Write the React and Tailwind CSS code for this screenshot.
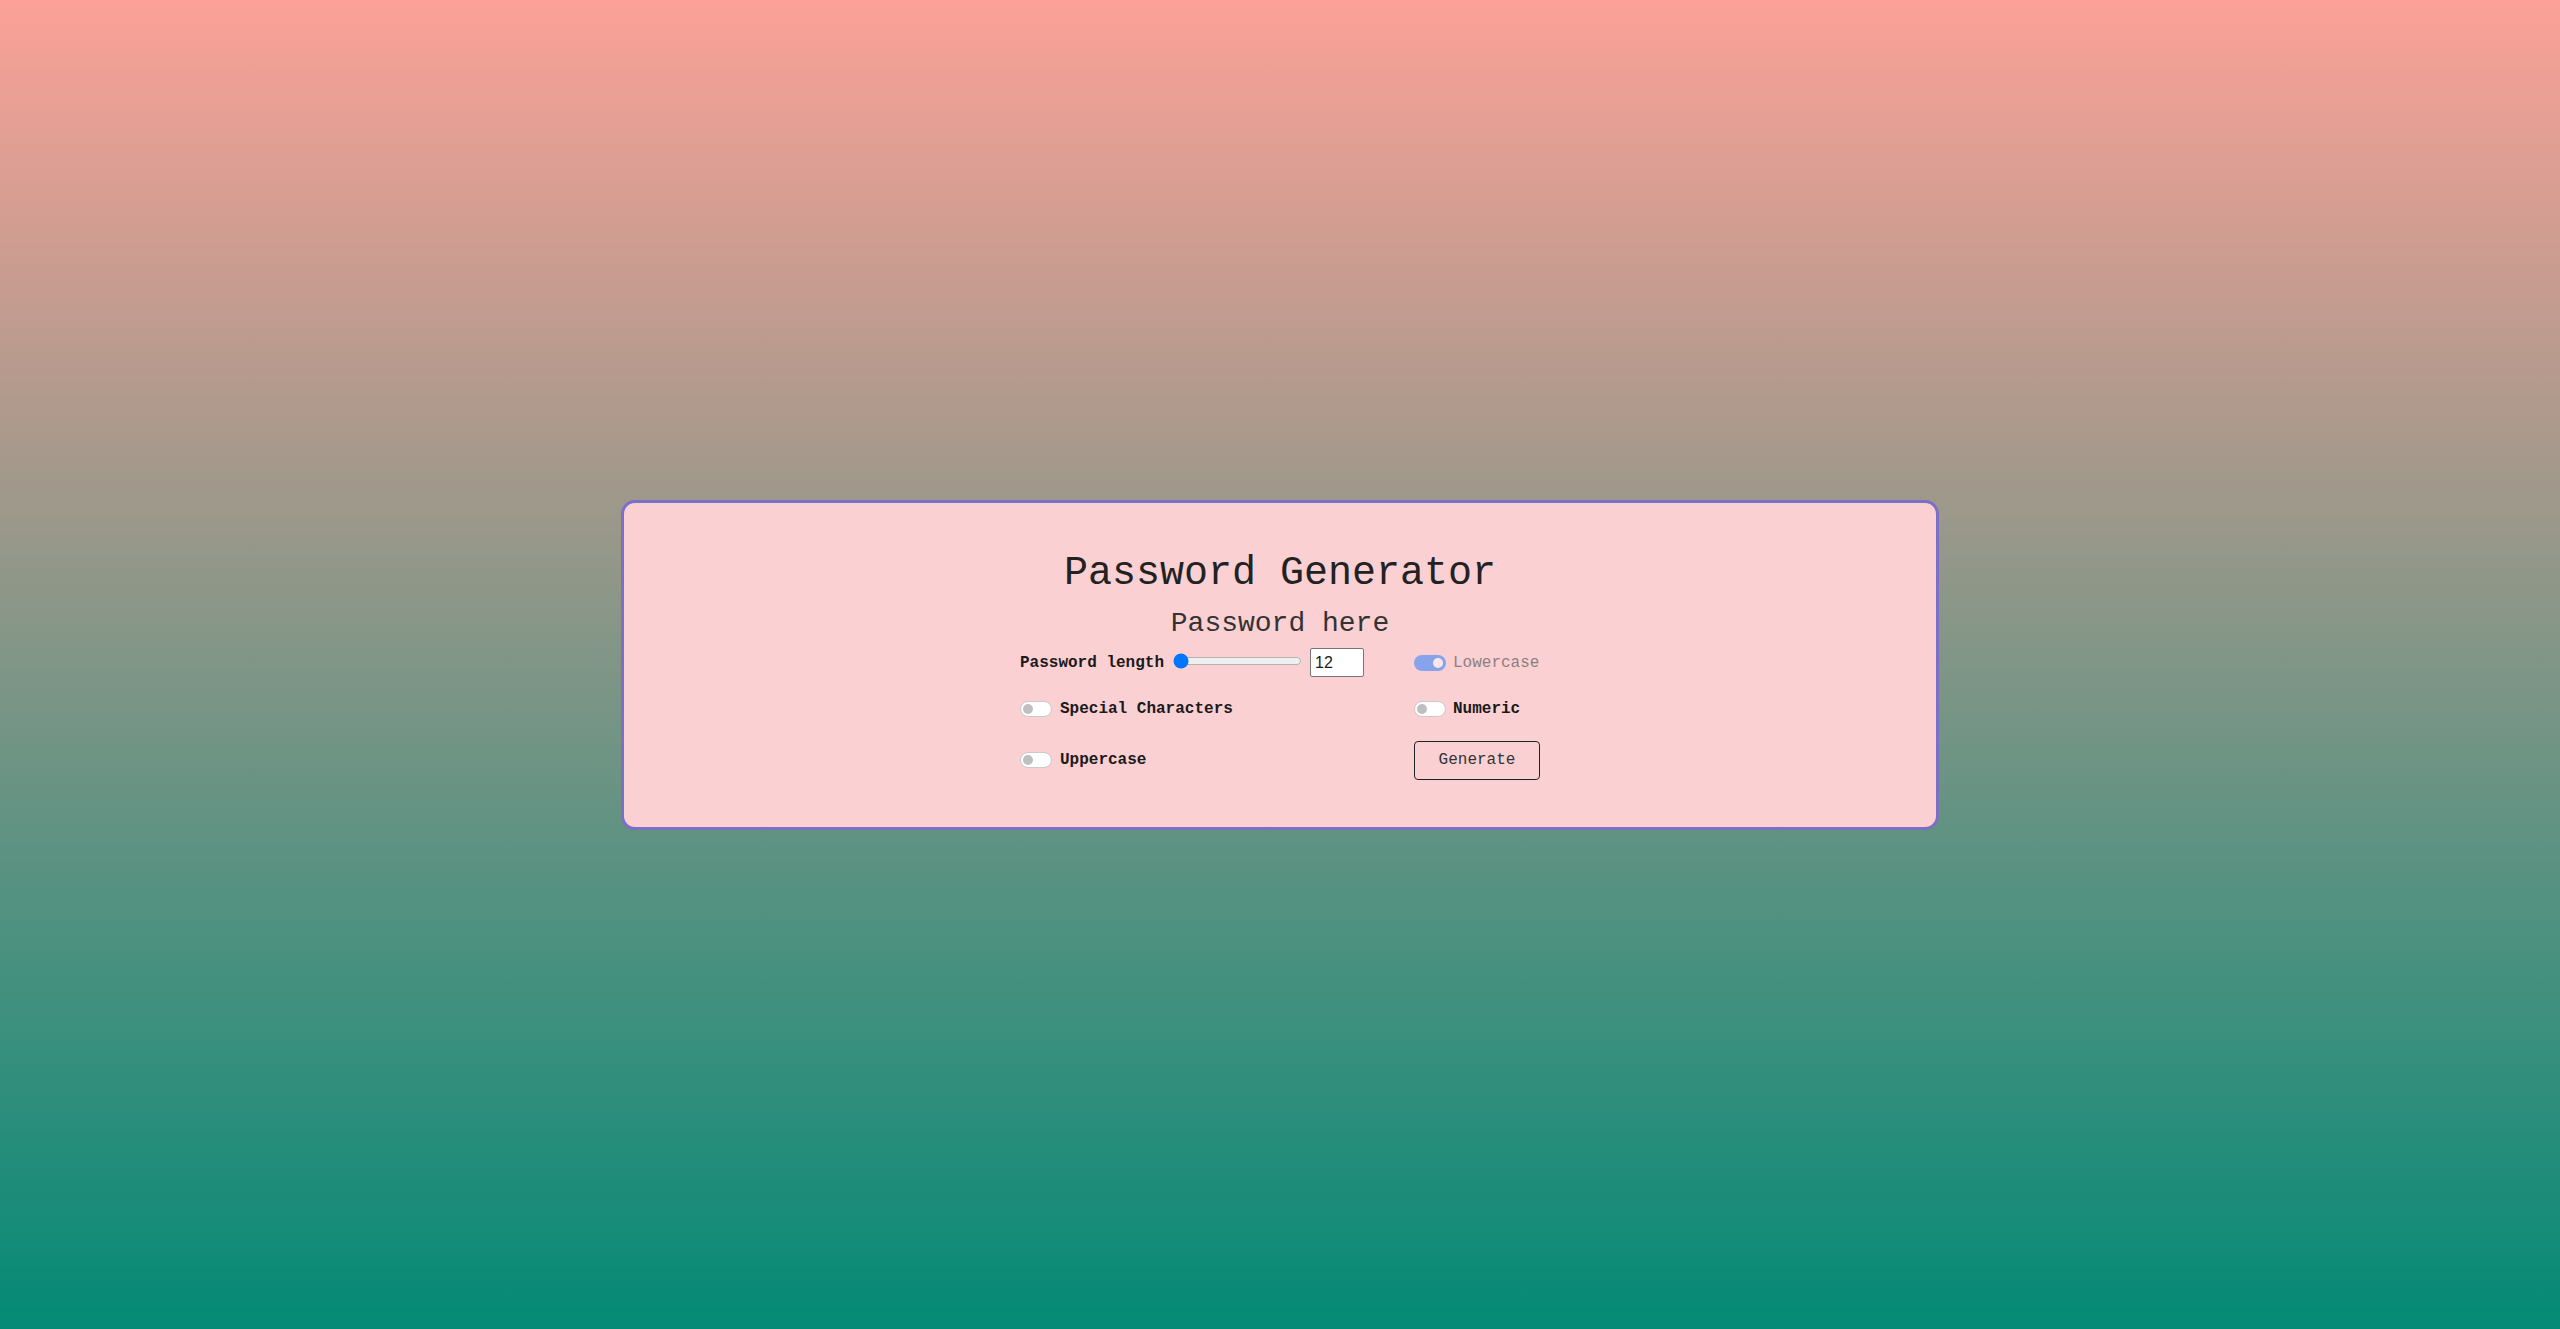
import React from "react";

function Toggle({ checked = false }) {
  if (checked) {
    return (
      <span className="relative inline-block w-[32px] h-[16px] rounded-full bg-[#86a3ec] shrink-0">
        <span className="absolute right-[3px] top-[3px] w-[10px] h-[10px] rounded-full bg-[#fbe6e8]" />
      </span>
    );
  }
  return (
    <span className="relative inline-block w-[32px] h-[16px] rounded-full bg-white border border-[#c9c9c9] shrink-0">
      <span className="absolute left-[2px] top-[2px] w-[10px] h-[10px] rounded-full bg-[#bfbfbf]" />
    </span>
  );
}

export default function App() {
  const mono = { fontFamily: '"Liberation Mono", "Courier New", monospace' };
  return (
    <div
      className="w-full h-[1329px] flex items-center justify-center bg-linear-to-b/srgb from-[#fca197] to-[#038a76]"
      style={mono}
    >
      <div className="w-[1318px] h-[330px] rounded-[14px] border-[3px] border-[#7b6fc6] bg-[#fad0d3] flex flex-col items-center pt-[48px]">
        <h1 className="text-[40px] leading-[46px] text-[#222] font-normal m-0">Password Generator</h1>
        <div className="mt-[11px] text-[28px] leading-[32px] text-[#333]">Password here</div>
        <div className="mt-[8px] grid grid-cols-[394px_126px] items-center">
          <div className="flex items-center h-[30px]">
            <span className="text-[16px] font-bold text-[#1a1a1a]">Password length</span>
            <input
              type="range"
              min="8"
              max="64"
              defaultValue="8"
              className="ml-[9px] w-[129px] h-[16px] mb-[4px]"
            />
            <input
              type="number"
              defaultValue="12"
              className="ml-[8px] w-[54px] h-[29px] bg-white border border-[#767676] rounded-[2px] px-[4px] text-[16px] text-[#1a1a1a]"
              style={{ fontFamily: '"Liberation Sans", Arial, sans-serif' }}
            />
          </div>
          <div className="flex items-center gap-[7px] h-[30px]">
            <Toggle checked />
            <span className="text-[16px] text-[#8c7f80]">Lowercase</span>
          </div>

          <div className="flex items-center gap-[8px] mt-[21px] h-[20px]">
            <Toggle />
            <span className="text-[16px] font-bold text-[#1a1a1a]">Special Characters</span>
          </div>
          <div className="flex items-center gap-[7px] mt-[21px] h-[20px]">
            <Toggle />
            <span className="text-[16px] font-bold text-[#1a1a1a]">Numeric</span>
          </div>

          <div className="flex items-center gap-[8px] mt-[22px] h-[39px]">
            <Toggle />
            <span className="text-[16px] font-bold text-[#1a1a1a]">Uppercase</span>
          </div>
          <div className="mt-[22px]">
            <button className="w-[126px] h-[39px] border border-[#222] rounded-[4px] bg-transparent text-[16px] text-[#333]" style={mono}>
              Generate
            </button>
          </div>
        </div>
      </div>
    </div>
  );
}
